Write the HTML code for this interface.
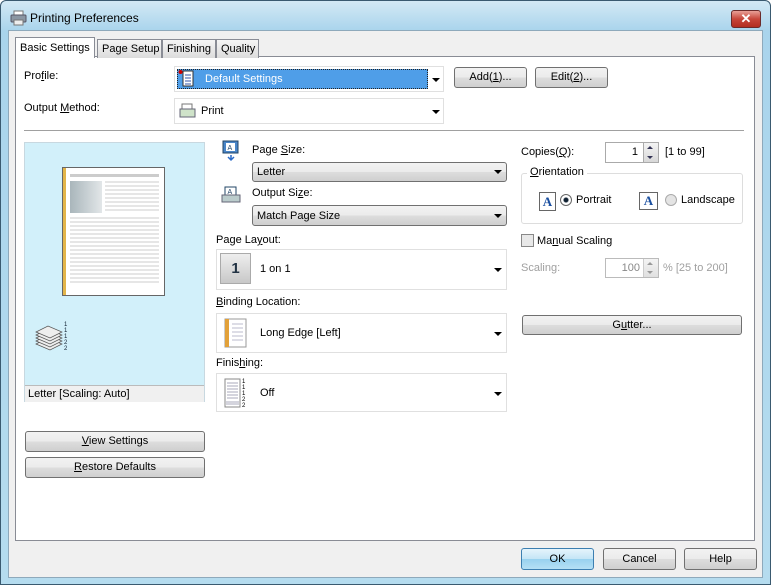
<!DOCTYPE html>
<html><head><meta charset="utf-8"><style>
*{box-sizing:border-box;margin:0;padding:0}
body{width:771px;height:585px;overflow:hidden;font-family:"Liberation Sans",sans-serif;font-size:11px;color:#000;background:#fff}
.a{position:absolute}
.win{left:0;top:0;width:771px;height:585px;background:linear-gradient(#d3e9f5,#a9d4ec 30px,#b5dcef);border:1px solid #3a5a70;border-radius:6px 6px 0 0}
.client{left:8px;top:30px;width:755px;height:548px;background:#f0f0f0;border:1px solid #8ea9bb}
.panel{left:15px;top:56px;width:740px;height:485px;background:#fff;border:1px solid #898c95}
.tab{top:39px;height:19px;border:1px solid #898c95;border-bottom:none;background:linear-gradient(#f5f5f5,#dcdcdc);padding:3px 4px 0;font-size:11px;white-space:nowrap}
.btn{border:1px solid #707070;border-radius:3px;background:linear-gradient(#f2f2f2 0,#ebebeb 50%,#dddddd 51%,#cfcfcf);text-align:center;font-size:11px}
.dd{border:1px solid #e0e0e0;background:#fff}
.sel{border:1px solid #707070;border-radius:3px;background:linear-gradient(#f2f2f2,#ebebeb 50%,#dddddd 51%,#cfcfcf);padding:3px 4px;font-size:11px}
.arr{width:0;height:0;border-left:4px solid transparent;border-right:4px solid transparent;border-top:4px solid #000}
.sa{width:0;height:0;border-left:3px solid transparent;border-right:3px solid transparent}
u{text-decoration:underline}
</style></head><body>
<div class="a win"></div>
<svg class="a" style="left:10px;top:10px" width="17" height="16" viewBox="0 0 17 16"><rect x="4" y="1" width="9" height="5" fill="#fff" stroke="#777"/><rect x="1" y="5" width="15" height="7" rx="1" fill="#8a96a3" stroke="#556"/><rect x="4" y="10" width="9" height="5" fill="#eee" stroke="#777"/></svg>
<div class="a" style="left:30px;top:11px;font-size:12px">Printing Preferences</div>
<div class="a" style="left:731px;top:10px;width:30px;height:18px;border:1px solid #6b2b2b;border-radius:3px;background:linear-gradient(#e8a097,#c7463a 50%,#b22d20);color:#fff;font-weight:bold;text-align:center;font-size:13px;line-height:16px">✕</div>
<div class="a client"></div>
<div class="a panel"></div>
<div class="a tab" style="left:15px;top:37px;height:21px;background:#fff;z-index:2;padding-top:4px">Basic Settings</div>
<div class="a tab" style="left:97px;width:65px">Page Setup</div>
<div class="a tab" style="left:162px;width:54px">Finishing</div>
<div class="a tab" style="left:216px;width:43px">Quality</div>

<div class="a" style="left:24px;top:70px">Pro<u>f</u>ile:</div>
<div class="a dd" style="left:174px;top:66px;width:270px;height:26px"></div>
<div class="a" style="left:177px;top:69px;width:251px;height:20px;background:#4f9ee8;border:1px dotted #222"></div>
<svg class="a" style="left:178px;top:69px" width="18" height="20"><circle cx="2.5" cy="3" r="2" fill="#c00"/><rect x="5" y="2" width="10" height="15" fill="#fff" stroke="#333"/><path d="M7 6h6M7 9h6M7 12h6M7 15h6" stroke="#3355aa"/></svg>
<div class="a" style="left:205px;top:73px;color:#fff;font-size:11px">Default Settings</div>
<div class="a arr" style="left:432px;top:78px"></div>
<div class="a btn" style="left:454px;top:67px;width:73px;height:21px;line-height:19px">Add(<u>1</u>)...</div>
<div class="a btn" style="left:535px;top:67px;width:73px;height:21px;line-height:19px">Edit(<u>2</u>)...</div>

<div class="a" style="left:24px;top:102px">Output <u>M</u>ethod:</div>
<div class="a dd" style="left:174px;top:98px;width:270px;height:26px"></div>
<svg class="a" style="left:179px;top:103px" width="17" height="16"><rect x="3" y="1" width="10" height="6" fill="#fff" stroke="#777"/><rect x="1" y="6" width="15" height="8" fill="#cfe3c9" stroke="#667"/></svg>
<div class="a" style="left:201px;top:105px">Print</div>
<div class="a arr" style="left:432px;top:110px"></div>
<div class="a" style="left:24px;top:130px;width:720px;height:1px;background:#a0a0a0"></div>

<div class="a" style="left:24px;top:142px;width:181px;height:260px;background:#d2f0fa;border:1px solid #c8d8e0"></div>
<div class="a" style="left:25px;top:385px;width:179px;height:17px;background:#f0f0f0;border-top:1px solid #bbb;padding:2px 3px">Letter [Scaling: Auto]</div>
<svg class="a" style="left:62px;top:167px" width="104" height="130"><rect x="0.5" y="0.5" width="102" height="128" fill="#fff" stroke="#666"/><rect x="1" y="1" width="3" height="127" fill="#e2b54a"/><rect x="8" y="7" width="89" height="3" fill="#ccc"/><defs><linearGradient id="g"><stop offset="0" stop-color="#a9b6bb"/><stop offset="1" stop-color="#e2e6e8"/></linearGradient></defs><rect x="8" y="14" width="32" height="32" fill="url(#g)"/>
<g stroke="#ccc"><path d="M43 15h54M43 19h54M43 23h54M43 27h54M43 31h54M43 35h54M43 39h54M43 43h54"/><path d="M8 51h89M8 55h89M8 59h89M8 63h89M8 67h89M8 71h89M8 75h89M8 79h89M8 83h89M8 87h89M8 91h89M8 95h89M8 99h89M8 103h89M8 107h89M8 111h89M8 115h89"/></g></svg>
<svg class="a" style="left:34px;top:318px" width="36" height="36"><g fill="#eee" stroke="#555" stroke-width=".7"><path d="M2 26l14 6 12-6-14-6z"/><path d="M2 23l14 6 12-6-14-6z"/><path d="M2 20l14 6 12-6-14-6z"/><path d="M2 17l14 6 12-6-14-6z"/><path d="M2 14l14 6 12-6-14-6z"/></g><text x="30" y="8" font-size="6" fill="#123">1</text><text x="30" y="14" font-size="6" fill="#123">1</text><text x="30" y="20" font-size="6" fill="#123">1</text><text x="30" y="26" font-size="6" fill="#123">2</text><text x="30" y="32" font-size="6" fill="#123">2</text></svg>
<div class="a btn" style="left:25px;top:431px;width:180px;height:21px;line-height:19px"><u>V</u>iew Settings</div>
<div class="a btn" style="left:25px;top:457px;width:180px;height:21px;line-height:19px"><u>R</u>estore Defaults</div>

<svg class="a" style="left:221px;top:140px" width="20" height="22"><rect x="2" y="1" width="15" height="12" fill="#4a86c8" stroke="#246"/><rect x="5" y="3" width="9" height="8" fill="#fff"/><text x="6.5" y="10" font-size="7" fill="#246">A</text><path d="M10 15v5M7 17l3 3 3-3" stroke="#2a6ac8" stroke-width="1.5" fill="none"/></svg>
<div class="a" style="left:252px;top:144px">Page <u>S</u>ize:</div>
<div class="a sel" style="left:252px;top:162px;width:255px;height:20px">Letter</div><div class="a arr" style="left:494px;top:170px"></div>
<svg class="a" style="left:221px;top:185px" width="20" height="20"><rect x="4" y="2" width="11" height="9" fill="#fff" stroke="#246"/><text x="6.5" y="9" font-size="7" fill="#246">A</text><rect x="1" y="10" width="18" height="7" fill="#bcc" stroke="#667"/></svg>
<div class="a" style="left:252px;top:187px">Output Si<u>z</u>e:</div>
<div class="a sel" style="left:252px;top:205px;width:255px;height:21px;padding-top:4px">Match Page Size</div><div class="a arr" style="left:494px;top:214px"></div>

<div class="a" style="left:216px;top:234px">Page La<u>y</u>out:</div>
<div class="a dd" style="left:216px;top:249px;width:291px;height:41px"></div>
<div class="a" style="left:220px;top:253px;width:31px;height:31px;border:1px solid #aaa;background:linear-gradient(#eee,#c8c8c8);text-align:center;font-weight:bold;font-size:15px;color:#234;line-height:29px">1</div>
<div class="a" style="left:260px;top:263px">1 on 1</div><div class="a arr" style="left:494px;top:268px"></div>

<div class="a" style="left:216px;top:296px"><u>B</u>inding Location:</div>
<div class="a dd" style="left:216px;top:313px;width:291px;height:40px"></div>
<svg class="a" style="left:224px;top:318px" width="24" height="30"><rect x="1" y="1" width="21" height="28" fill="#fff" stroke="#999"/><rect x="1" y="1" width="4" height="28" fill="#e2a13a"/><path d="M8 6h11M8 10h11M8 14h11M8 18h11M8 22h11" stroke="#bbc"/></svg>
<div class="a" style="left:260px;top:327px">Long Edge [Left]</div><div class="a arr" style="left:494px;top:332px"></div>

<div class="a" style="left:216px;top:357px">Finis<u>h</u>ing:</div>
<div class="a dd" style="left:216px;top:373px;width:291px;height:39px"></div>
<svg class="a" style="left:224px;top:376px" width="26" height="34"><rect x="1" y="3" width="15" height="28" fill="#fff" stroke="#888"/><path d="M3 7h11M3 10h11M3 13h11M3 16h11M3 19h11M3 22h11M2 26h13M2 28h13" stroke="#aab"/><text x="18" y="7" font-size="6">1</text><text x="18" y="13" font-size="6">1</text><text x="18" y="19" font-size="6">1</text><text x="18" y="25" font-size="6">2</text><text x="18" y="31" font-size="6">2</text></svg>
<div class="a" style="left:260px;top:387px">Off</div><div class="a arr" style="left:494px;top:392px"></div>

<div class="a" style="left:521px;top:146px">Copies(<u>Q</u>):</div>
<div class="a" style="left:605px;top:142px;width:54px;height:21px;border:1px solid #aaa;background:#fff;text-align:right;padding:3px 20px 0 0">1</div>
<div class="a" style="left:643px;top:143px;width:15px;height:19px;background:linear-gradient(#f4f4f4,#d8d8d8);border-left:1px solid #aaa"></div>
<div class="a sa" style="left:647px;top:146px;border-bottom:3px solid #335"></div>
<div class="a sa" style="left:647px;top:156px;border-top:3px solid #335"></div>
<div class="a" style="left:665px;top:146px">[1 to 99]</div>
<div class="a" style="left:521px;top:173px;width:222px;height:51px;border:1px solid #ddd;border-radius:3px"></div>
<div class="a" style="left:527px;top:166px;background:#fff;padding:0 3px"><u>O</u>rientation</div>
<div class="a" style="left:539px;top:192px;width:17px;height:19px;border:1px solid #666;background:#fff;color:#1a4fa0;font-weight:bold;font-family:'Liberation Serif',serif;font-size:13px;text-align:center;line-height:17px">A</div>
<div class="a" style="left:560px;top:194px;width:12px;height:12px;border-radius:50%;border:1px solid #666;background:radial-gradient(#123 2px,#fff 3px)"></div>
<div class="a" style="left:576px;top:194px">Portrait</div>
<div class="a" style="left:639px;top:192px;width:19px;height:18px;border:1px solid #666;background:#fff;color:#1a4fa0;font-weight:bold;font-family:'Liberation Serif',serif;font-size:13px;text-align:center;line-height:16px">A</div>
<div class="a" style="left:665px;top:194px;width:12px;height:12px;border-radius:50%;border:1px solid #aaa;background:#e4e4e4"></div>
<div class="a" style="left:681px;top:194px">Landscape</div>
<div class="a" style="left:521px;top:234px;width:13px;height:13px;border:1px solid #888;background:#e8e8e8"></div>
<div class="a" style="left:537px;top:235px">Ma<u>n</u>ual Scaling</div>
<div class="a" style="left:521px;top:262px;color:#a0a0a0">Scaling:</div>
<div class="a" style="left:605px;top:258px;width:54px;height:20px;border:1px solid #bbb;background:#fff;text-align:right;padding:3px 18px 0 0;color:#888">100</div>
<div class="a" style="left:643px;top:259px;width:15px;height:18px;background:linear-gradient(#f4f4f4,#e0e0e0);border-left:1px solid #ccc"></div>
<div class="a sa" style="left:647px;top:262px;border-bottom:3px solid #999"></div>
<div class="a sa" style="left:647px;top:271px;border-top:3px solid #999"></div>
<div class="a" style="left:663px;top:262px;color:#a0a0a0">% [25 to 200]</div>
<div class="a btn" style="left:522px;top:315px;width:220px;height:20px;line-height:18px">G<u>u</u>tter...</div>

<div class="a btn" style="left:521px;top:548px;width:73px;height:22px;line-height:20px;border-color:#3c7fb1;background:linear-gradient(#e5f4fc,#c4e5f6 50%,#98d1ef 51%,#b6e0f5)">OK</div>
<div class="a btn" style="left:603px;top:548px;width:73px;height:22px;line-height:20px">Cancel</div>
<div class="a btn" style="left:684px;top:548px;width:73px;height:22px;line-height:20px">Help</div>
</body></html>
